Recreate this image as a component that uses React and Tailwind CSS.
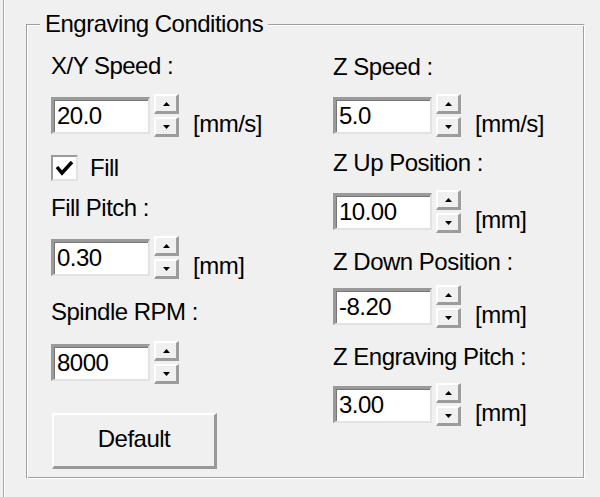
import React from "react";

function Arrow({ up }) {
  return (
    <svg width="7" height="4" viewBox="0 0 7 4">
      {up ? <polygon points="3.5,0 7,4 0,4" fill="#000" /> : <polygon points="0,0 7,0 3.5,4" fill="#000" />}
    </svg>
  );
}

function Spin() {
  return (
    <div className="flex flex-col gap-[3px] w-[25px] ml-[4px]">
      <div className="h-[20px] flex items-center justify-center bg-[#f0f0f0] border-t-2 border-l-2 border-t-white border-l-white border-b-[3px] border-r-[3px] border-b-[#9c9c9c] border-r-[#9c9c9c]">
        <Arrow up />
      </div>
      <div className="h-[20px] flex items-center justify-center bg-[#f0f0f0] border-t-2 border-l-2 border-t-white border-l-white border-b-[3px] border-r-[3px] border-b-[#9c9c9c] border-r-[#9c9c9c]">
        <Arrow />
      </div>
    </div>
  );
}

function Field({ value, unit, className = "" }) {
  return (
    <div className={"flex items-center h-[43px] " + className}>
      <div className="w-[99px] h-[37px] bg-white border-t-[3px] border-l-[3px] border-t-[#9a9a9a] border-l-[#9a9a9a] border-b-2 border-r-2 border-b-[#e2e2e2] border-r-[#e2e2e2] shadow-[inset_1px_1px_0_#777] flex items-center pl-[3px]">
        <span className="leading-6">{value}</span>
      </div>
      <Spin />
      {unit ? <span className="self-end ml-[14px] mb-[1px] leading-6">{unit}</span> : null}
    </div>
  );
}

function Label({ children, className = "" }) {
  return <div className={"h-[24px] leading-6 whitespace-nowrap " + className}>{children}</div>;
}

export default function App() {
  return (
    <div className="w-[600px] h-[497px] bg-[#f0f0f0] pl-[3px] text-black text-[24px] leading-6 tracking-[-0.5px] font-['Liberation_Sans',Arial,sans-serif] overflow-hidden">
      <div className="h-full border-l border-l-[#a9a9a9] shadow-[inset_1px_0_0_#ffffff] pt-[24px] pl-[22px]">
        <div className="relative w-[559px] h-[455px] border-t border-l border-t-[#a0a0a0] border-l-[#a0a0a0] border-b border-r border-b-white border-r-white shadow-[inset_1px_1px_0_#ffffff,inset_-1px_-1px_0_#a0a0a0] pt-[29px] pl-[24px] flex">
          <div className="absolute left-[13px] -top-[13px] px-[5px] bg-[#f0f0f0] leading-6">Engraving Conditions</div>

          <div className="w-[282px] flex flex-col items-start">
            <Label>X/Y Speed :</Label>
            <Field value="20.0" unit="[mm/s]" className="mt-[16px]" />
            <div className="mt-[18px] flex items-center h-[26px]">
              <div className="w-[27px] h-[26px] bg-white border-t-2 border-l-2 border-t-[#9a9a9a] border-l-[#9a9a9a] border-b-2 border-r-2 border-b-[#e2e2e2] border-r-[#e2e2e2] flex items-center justify-center">
                <svg width="22" height="20" viewBox="0 0 22 20">
                  <polyline points="3,9 8,15 18,4" fill="none" stroke="#000" strokeWidth="3.5" />
                </svg>
              </div>
              <span className="ml-[12px] leading-6">Fill</span>
            </div>
            <Label className="mt-[15px]">Fill Pitch :</Label>
            <Field value="0.30" unit="[mm]" className="mt-[16px]" />
            <Label className="mt-[21px]">Spindle RPM :</Label>
            <Field value="8000" className="mt-[17px]" />
            <button className="mt-[29px] ml-[1px] w-[165px] h-[56px] bg-[#f0f0f0] border-t-2 border-l-2 border-t-white border-l-white border-b-[3px] border-r-[3px] border-b-[#999999] border-r-[#999999] flex items-center justify-center pb-[3px] leading-6">
              Default
            </button>
          </div>

          <div className="flex flex-col items-start mt-[1px]">
            <Label>Z Speed :</Label>
            <Field value="5.0" unit="[mm/s]" className="mt-[15px]" />
            <Label className="mt-[14px]">Z Up Position :</Label>
            <Field value="10.00" unit="[mm]" className="mt-[15px]" />
            <Label className="mt-[17px]">Z Down Position :</Label>
            <Field value="-8.20" unit="[mm]" className="mt-[11px]" />
            <Label className="mt-[17px]">Z Engraving Pitch :</Label>
            <Field value="3.00" unit="[mm]" className="mt-[14px]" />
          </div>
        </div>
      </div>
    </div>
  );
}
